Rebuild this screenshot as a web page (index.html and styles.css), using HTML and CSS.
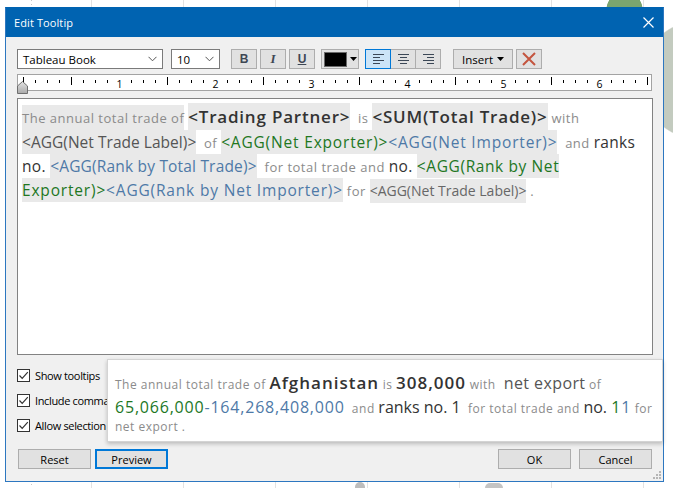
FILE: index.html
```html
<!DOCTYPE html>
<html>
<head>
<meta charset="utf-8">
<title>Edit Tooltip</title>
<link rel="stylesheet" href="styles.css">
</head>
<body>
<div class="mark mark-green"></div>
<div class="mark mark-gray"></div>
<div class="mark mark-b1"></div>
<div class="mark mark-b2"></div>

<div class="dialog">
  <div class="titlebar">
    <span class="title">Edit Tooltip</span>
    <svg class="close" width="11" height="11" viewBox="0 0 11 11"><path d="M0.5 0.5L10.5 10.5M10.5 0.5L0.5 10.5" stroke="#fff" stroke-width="1.2" fill="none"/></svg>
  </div>
  <div class="dbody">
    <div class="toolbar">
      <div class="select font-sel"><span>Tableau Book</span><svg width="9" height="6" viewBox="0 0 9 6"><path d="M0.5 0.8L4.5 4.8L8.5 0.8" stroke="#555" fill="none"/></svg></div>
      <div class="select size-sel"><span>10</span><svg width="9" height="6" viewBox="0 0 9 6"><path d="M0.5 0.8L4.5 4.8L8.5 0.8" stroke="#555" fill="none"/></svg></div>
      <button class="tb fmt fmt-b">B</button>
      <button class="tb fmt fmt-i">I</button>
      <button class="tb fmt fmt-u">U</button>
      <button class="tb color"><span class="swatch"></span><svg width="7" height="4" viewBox="0 0 7 4"><path d="M0 0H7L3.5 4Z" fill="#000"/></svg></button>
      <div class="align-group">
        <button class="tb al on"><svg width="11" height="10" viewBox="0 0 11 10"><path d="M0 0.5H11M0 3.5H7M0 6.5H11M0 9.5H7" stroke="#3b4756"/></svg></button>
        <button class="tb al"><svg width="11" height="10" viewBox="0 0 11 10"><path d="M0 0.5H11M2 3.5H9M0 6.5H11M2 9.5H9" stroke="#3b4756"/></svg></button>
        <button class="tb al"><svg width="11" height="10" viewBox="0 0 11 10"><path d="M0 0.5H11M4 3.5H11M0 6.5H11M4 9.5H11" stroke="#3b4756"/></svg></button>
      </div>
      <button class="tb insert">Insert<svg width="7" height="4" viewBox="0 0 7 4"><path d="M0 0H7L3.5 4Z" fill="#000"/></svg></button>
      <button class="tb clear"><svg width="14" height="14" viewBox="0 0 14 14"><path d="M1 1L13 13M13 1L1 13" stroke="#c4553f" stroke-width="2" fill="none"/></svg></button>
    </div>

    <div class="ruler">
      <svg class="ticks" width="633" height="15" viewBox="0 0 633 15">
        <path d="M17.5 5v3M29.5 5v3M41.5 5v3M65.5 5v3M77.5 5v3M89.5 5v3M113.5 5v3M125.5 5v3M137.5 5v3M161.5 5v3M173.5 5v3M185.5 5v3M209.5 5v3M221.5 5v3M233.5 5v3M257.5 5v3M269.5 5v3M281.5 5v3M305.5 5v3M317.5 5v3M329.5 5v3M353.5 5v3M365.5 5v3M377.5 5v3M401.5 5v3M413.5 5v3M425.5 5v3M449.5 5v3M461.5 5v3M473.5 5v3M497.5 5v3M509.5 5v3M521.5 5v3M545.5 5v3M557.5 5v3M569.5 5v3M593.5 5v3M605.5 5v3M617.5 5v3" stroke="#000" fill="none"/>
        <path d="M5.5 2v7M53.5 2v8M149.5 2v8M245.5 2v8M341.5 2v8M437.5 2v8M533.5 2v8M629.5 2v8" stroke="#000" fill="none"/>
        <g class="nums" text-anchor="middle">
          <text x="101.5" y="12.5">1</text>
          <text x="197.5" y="12.5">2</text>
          <text x="293.5" y="12.5">3</text>
          <text x="389.5" y="12.5">4</text>
          <text x="485.5" y="12.5">5</text>
          <text x="581.5" y="12.5">6</text>
        </g>
      </svg>
      <svg class="indent" width="12" height="13" viewBox="0 0 12 13">
        <defs><linearGradient id="ig" x1="0" y1="0" x2="0" y2="1"><stop offset="0" stop-color="#e4e4e4"/><stop offset="1" stop-color="#a9a9a9"/></linearGradient></defs>
        <path d="M5.5 0.5L10.5 5V12.5H0.5V5Z" fill="url(#ig)" stroke="#6f6f6f"/>
      </svg>
    </div>

    <div class="editor">
      <div class="ln l1"><span class="es hl">The annual total trade of</span><span class="es"> </span><span class="el hl dk">&lt;Trading Partner&gt;</span><span class="es">  is </span><span class="el hl dk">&lt;SUM(Total Trade)&gt;</span><span class="es"> with</span></div>
      <div class="ln"><span class="em hl gy tight">&lt;AGG(Net Trade Label)&gt;</span><span class="es">  of </span><span class="em hl gn wide">&lt;AGG(Net Exporter)&gt;</span><span class="em hl bl wide">&lt;AGG(Net Importer)&gt;</span><span class="es">  and </span><span class="em dk">ranks</span></div>
      <div class="ln"><span class="em dk">no. </span><span class="em hl bl mid">&lt;AGG(Rank by Total Trade)&gt;</span><span class="es">  for total trade and </span><span class="em dk">no. </span><span class="em hl gn semi">&lt;AGG(Rank by Net</span></div>
      <div class="ln"><span class="em hl gn wide">Exporter)&gt;</span><span class="em hl bl wide">&lt;AGG(Rank by Net Importer)&gt;</span><span class="es"> for </span><span class="ez hl">&lt;AGG(Net Trade Label)&gt;</span><span class="es"> .</span></div>
    </div>

    <div class="opts">
      <label class="opt"><span class="cb"><svg width="11" height="11" viewBox="0 0 11 11"><path d="M1.5 5.5L4.2 8.3L9.8 2.2" stroke="#333" stroke-width="1.2" fill="none"/></svg></span>Show tooltips</label>
      <label class="opt"><span class="cb"><svg width="11" height="11" viewBox="0 0 11 11"><path d="M1.5 5.5L4.2 8.3L9.8 2.2" stroke="#333" stroke-width="1.2" fill="none"/></svg></span>Include command buttons</label>
      <label class="opt"><span class="cb"><svg width="11" height="11" viewBox="0 0 11 11"><path d="M1.5 5.5L4.2 8.3L9.8 2.2" stroke="#333" stroke-width="1.2" fill="none"/></svg></span>Allow selection by category</label>
    </div>

    <div class="buttons">
      <button class="btn reset">Reset</button>
      <button class="btn preview-btn">Preview</button>
      <span class="spacer"></span>
      <button class="btn">OK</button>
      <button class="btn cancel">Cancel</button>
    </div>
  </div>

  <div class="preview">
    <div class="pln pl1"><span class="ps">The annual total trade of </span><span class="pb">Afghanistan</span><span class="ps"> is </span><span class="pb">308,000</span><span class="ps"> with </span><span class="pm gy nx"> net export</span><span class="ps"> of</span></div>
    <div class="pln pl2"><span class="pm gn">65,066,000</span><span class="pm bl">-164,268,408,000</span><span class="ps">  and </span><span class="pm dk rk">ranks no. 1</span><span class="ps">  for total trade and </span><span class="pm dk rk">no. </span><span class="pm gn">1</span><span class="pm bl">1</span><span class="ps"> for</span></div>
    <div class="pln pl3"><span class="ps">net export .</span></div>
  </div>

  <svg class="grip" width="8" height="8" viewBox="0 0 8 8"><path d="M6 0h2v2h-2zM3 3h2v2h-2zM6 3h2v2h-2zM0 6h2v2h-2zM3 6h2v2h-2zM6 6h2v2h-2z" fill="#b5b5b5"/></svg>
</div>
</body>
</html>
```

FILE: styles.css
```css
* { box-sizing: border-box; }
html { margin: 0; padding: 0; overflow: hidden; }
body {
  margin: 0;
  padding: 0;
  width: 673px;
  height: 488px;
  overflow: hidden;
  position: relative;
  font-family: "Open Sans", "Noto Sans", sans-serif;
  background-color: #fff;
  background-image:
    repeating-linear-gradient(to bottom, #c8c8c8 0 1px, transparent 1px 4px),
    repeating-linear-gradient(to right, transparent 0 91px, #e2e2e2 91px 92px);
  background-size: 1px 100%, 100% 100%;
  background-position: 31px 0, 0 0;
  background-repeat: no-repeat, repeat;
}

/* chart marks behind the dialog (free canvas) */
.mark { position: absolute; }
.mark-green {
  left: 606px; top: 0; width: 37px; height: 29px;
  background: radial-gradient(circle 18.5px at 18.5px 10px, #7ba56f 96%, rgba(123, 165, 111, 0) 100%);
}
.mark-gray {
  left: 640px; top: 20px; width: 33px; height: 120px;
  background: radial-gradient(circle 60px at 60px 60px, #c3cbbf 98%, rgba(195, 203, 191, 0) 100%);
}
.mark-b1 { left: 355px; top: 482px; width: 10px; height: 6px; border-radius: 5px 5px 0 0; background: #bdbdbd; }
.mark-b2 { left: 485px; top: 483px; width: 18px; height: 5px; border-radius: 9px 9px 0 0; background: #c4c4c4; }

.dialog {
  position: relative;
  z-index: 1;
  margin: 7px 0 0 5px;
  width: 659px;
  height: 475px;
  border: 1px solid #2d77c0;
  border-top-color: #0063b1;
  background: #f0f0f0;
  display: flex;
  flex-direction: column;
}

.titlebar {
  height: 29px;
  flex: none;
  background: #0063b1;
  color: #fff;
  display: flex;
  align-items: center;
  justify-content: space-between;
  padding: 0 9px 0 8px;
  font-size: 11px;
}
.title { letter-spacing: 0.1px; }

.dbody {
  flex: 1;
  padding: 12px 10px 0 11px;
  display: flex;
  flex-direction: column;
}

/* toolbar */
.toolbar { display: flex; height: 20px; }
.select {
  background: #fff;
  border: 1px solid #7a7a7a;
  display: flex;
  align-items: center;
  justify-content: space-between;
  padding: 0 5px 0 5px;
  font-size: 11.5px;
  color: #000;
}
.font-sel { width: 146px; }
.size-sel { width: 49px; margin-left: 8px; }
.tb {
  height: 20px;
  border: 1px solid #adadad;
  background: #e1e1e1;
  padding: 0;
  margin: 0;
  display: flex;
  align-items: center;
  justify-content: center;
  font-family: inherit;
  color: #000;
}
.fmt { width: 26px; margin-left: 3px; color: #3e4754; font-size: 12px; }
.fmt-b { margin-left: 11px; font-family: "Liberation Sans", sans-serif; font-weight: 700; }
.fmt-i { font-family: "Liberation Serif", serif; font-weight: 700; font-style: italic; font-size: 13px; }
.fmt-u { font-family: "Liberation Sans", sans-serif; font-weight: 700; text-decoration: underline; }
.color { width: 38px; margin-left: 6px; justify-content: flex-start; padding-left: 2px; gap: 3px; }
.swatch { width: 23px; height: 15px; background: #000; border: 1px solid #6a6a6a; }
.align-group { display: flex; margin-left: 6px; }
.al { width: 26px; }
.al + .al { margin-left: -1px; }
.al.on { background: #cce4f7; border-color: #0078d7; position: relative; z-index: 1; }
.insert { width: 60px; margin-left: 12px; font-size: 11.5px; gap: 4px; }
.clear { width: 26px; margin-left: 3px; }

/* ruler */
.ruler {
  position: relative;
  margin-top: 5px;
  margin-right: 1px;
  height: 17px;
  border: 1px solid #a3a3a3;
  background: #fff;
}
.ticks { display: block; }
.nums { font-family: "Open Sans", sans-serif; font-size: 10.5px; fill: #000; }
.indent { position: absolute; left: -1px; top: 6px; }

/* editor */
.editor {
  margin-top: 7px;
  height: 257px;
  border: 1px solid #828282;
  background: #fff;
  padding: 4px 0 0 4px;
}
.ln { white-space: pre; height: 24px; line-height: 24px; font-size: 13px; }
.l1 { height: 27px; line-height: 27px; }
.ln > span, .pln > span { display: inline-block; }

.es { font-size: 13px; color: #8b8b8b; letter-spacing: 0.5px; }
.el { font-size: 17px; font-weight: 600; letter-spacing: 0.8px; }
.em { font-size: 15.5px; letter-spacing: 0.3px; }
.em.tight { letter-spacing: 0.03px; }
.em.wide { letter-spacing: 0.82px; }
.em.mid { letter-spacing: 0.18px; }
.em.semi { letter-spacing: 0.6px; }
.ez { font-size: 14px; color: #676767; letter-spacing: 0; }

.hl { background: #e9e9e9; }
.dk { color: #333; }
.gy { color: #555; }
.gn { color: #22771f; }
.bl { color: #4e79a7; }

/* options */
.opts { margin-top: 14px; display: flex; flex-direction: column; gap: 12px; }
.opt { display: flex; align-items: center; height: 13px; font-size: 11px; letter-spacing: -0.35px; color: #000; white-space: nowrap; }
.cb {
  width: 13px; height: 13px;
  border: 1px solid #333;
  background: #fff;
  margin-right: 5px;
  display: flex; align-items: center; justify-content: center;
}

/* buttons */
.buttons { margin-top: 17px; display: flex; height: 20px; }
.btn {
  width: 73px;
  height: 20px;
  border: 1px solid #adadad;
  background: #e1e1e1;
  font-family: inherit;
  font-size: 11px;
  color: #000;
  padding: 0;
}
.reset { margin-left: 1px; }
.preview-btn { margin-left: 4px; border: 2px solid #0078d7; }
.spacer { flex: 1; }
.cancel { margin-left: 8px; margin-right: 1px; }

/* preview tooltip (floats over the dialog) */
.preview {
  position: absolute;
  z-index: 2;
  left: 101px;
  top: 351px;
  width: 556px;
  height: 83px;
  background: #fff;
  border: 1px solid #d4d4d4;
  box-shadow: 0 2px 4px rgba(0, 0, 0, 0.22);
  padding: 10px 0 0 7px;
}
.pln { white-space: pre; font-size: 12px; }
.pl1 { height: 26px; line-height: 26px; }
.pl2 { height: 22px; line-height: 22px; }
.pl3 { height: 18px; line-height: 18px; }
.ps { font-size: 12px; color: #8b8b8b; letter-spacing: 0.5px; }
.pb { font-size: 17px; font-weight: 600; color: #333; letter-spacing: 1px; }
.pm { font-size: 16px; letter-spacing: 0.8px; }
.pm.rk { letter-spacing: 0; }
.pm.nx { letter-spacing: 0.4px; }

.grip { position: absolute; right: 2px; bottom: 2px; }
```
